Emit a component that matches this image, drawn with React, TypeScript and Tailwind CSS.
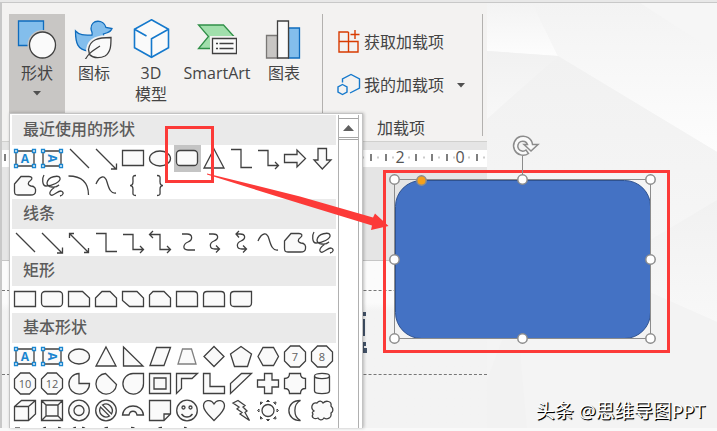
import type { ReactNode } from "react";

const INK = "#404040";
const BLUE = "#1a86d0";

function TextBox({ vertical }: { vertical?: boolean }) {
  return (
    <>
      <path d="M4 6h18v15H4z" />
      <text
        x="13"
        y="18"
        fontSize="12"
        fontWeight="700"
        textAnchor="middle"
        fill={BLUE}
        stroke="none"
        transform={vertical ? "rotate(90 13 13.5)" : undefined}
      >
        A
      </text>
      <g fill="#fff" stroke={BLUE}>
        <path d="M2.500 4.500h3v3h-3zM20.500 4.500h3v3h-3zM2.500 19.500h3v3h-3zM20.500 19.500h3v3h-3z" />
      </g>
    </>
  );
}

function Octagon({ label }: { label: string }) {
  return (
    <>
      <path d="M8.500 3h9L23.500 9v9L17.500 24h-9L2.500 18V9z" />
      <text x="13" y="17.500" fontSize="11" textAnchor="middle" fill="#606060" stroke="none">
        {label}
      </text>
    </>
  );
}

const glyphs: Record<string, ReactNode> = {
  "Text box": <TextBox />,
  "Vertical text box": <TextBox vertical />,
  Line: <path d="M4 4l19 19" />,
  Arrow: <path d="M3 4l20 20M23.500 18.500V24H18" />,
  "Double arrow": <path d="M3.500 4.500l19 19M3.500 9V4.500H8M22.500 19v4.500H18" />,
  Rectangle: <path d="M2.500 5.500h21v15h-21z" />,
  Oval: <ellipse cx="13" cy="13.500" rx="10.500" ry="7.500" />,
  "Rounded rectangle": <rect x="2.500" y="5.500" width="21" height="15" rx="3.500" />,
  Triangle: <path d="M13 4l10 19H3z" />,
  Elbow: <path d="M3 4.500h10v18h11" fill="none" />,
  "Elbow arrow": <path d="M3 5.500h10v15h10M20 17l3.500 3.500L20 24" fill="none" />,
  "Elbow double arrow": <path d="M3 5.500h10v15h10M20 17l3.500 3.500L20 24M6 2L2.500 5.500 6 9" fill="none" />,
  "Right arrow": <path d="M2.500 9.500H15V5l8.500 8.500L15 22v-4.500H2.500z" />,
  "Down arrow": <path d="M9 3.500h8.500V15H22l-8.700 9L5 15h4z" />,
  Freeform: (
    <path d="M2.500 12L9 4.500h8c3 0 4 2 1.500 4-3 2-3 5 .5 5.500 4 0 5 3 4.500 5.500 0 3-2 3.500-5 3.500H6c-3 0-3.500-1-3.500-4z" />
  ),
  Scribble: (
    <path
      d="M5 3C3 6 3 14 7 14c6 0 15-4 14-8-1-3-12-2-13 5 0 5 9 5 12 2-5 2-10 6-9 9 2 4 7-3 11-3 3 1 3 4-1 5"
      fill="none"
    />
  ),
  Arc: <path d="M2.500 4c13 0 20 6 20 19" fill="none" />,
  Curve: <path d="M3 12C7 3 12 3 14 10s4 12 9 11" fill="none" />,
  "Left brace": <path d="M16 3.500c-4 0-3 2-3 6 0 3-1 4-3 4 2 0 3 1 3 4 0 4-1 6 3 6" fill="none" />,
  "Right brace": <path d="M10 3.500c4 0 3 2 3 6 0 3 1 4 3 4-2 0-3 1-3 4 0 4 1 6-3 6" fill="none" />,
  "Curved line": <path d="M8 5h5c6 0 6 6 1 8s-6 8 0 8h7" fill="none" />,
  "Curved arrow": <path d="M8 5h4c6 0 6 5 1 7s-5 8 1 8h4M15 16.500l3.500 3.500-3.500 3.500" fill="none" />,
  "Curved double arrow": (
    <path d="M8 5h4c6 0 6 5 1 7s-5 8 1 8h4M15 16.500l3.500 3.500-3.500 3.500M11 2L8 5l3 3.500" fill="none" />
  ),
  "Snip one corner": <path d="M2.500 5.500h14l7 6.500v8.500h-21z" />,
  "Snip two corners": <path d="M2.500 12l6.500-6.500h8L23.500 12v8.500h-21z" />,
  "Snip diagonal": <path d="M2.500 5.500H17l6.500 6.500v8.500H9.500l-7-6z" />,
  "Snip and round": <path d="M6 5.500h11l6.500 6.500v8.500h-21V9z" />,
  "Round one corner": <path d="M2.500 5.500h17.500q3.500 0 3.500 3.500v11.500h-21z" />,
  "Round two corners": <path d="M6 5.500h14q3.500 0 3.500 3.500v11.500h-21V9Q2.500 5.500 6 5.500z" />,
  "Round diagonal": <path d="M6 5.500h17.500V17q0 3.500-3.500 3.500H6Q2.500 20.500 2.500 17V9Q2.500 5.500 6 5.500z" />,
  "Right triangle": <path d="M3.500 4l19.500 19H3.500z" />,
  Parallelogram: <path d="M9.500 4.500h14L17 22.500H3z" />,
  Trapezoid: <path d="M8.500 6h9l4.500 15H4z" stroke="#808080" />,
  Diamond: <path d="M13 3.500l10 10-10 10-10-10z" />,
  Pentagon: <path d="M13 3.500l10.500 7.500-4 12.500h-13L2.500 11z" />,
  Hexagon: <path d="M8 4.500h10.500l5 9-5 9H8l-5-9z" />,
  Heptagon: <Octagon label="7" />,
  Octagon: <Octagon label="8" />,
  Decagon: <Octagon label="10" />,
  Dodecagon: <Octagon label="12" />,
  Pie: <path d="M13 3.500v10h10.500A10.300 10.300 0 1 1 13 3.500z" />,
  Chord: <path d="M12.500 3.500l11 11A10.300 10.300 0 1 1 12.500 3.500z" />,
  Teardrop: <path d="M13 3.500h10.500v10A10.300 10.300 0 1 1 13 3.500z" />,
  Frame: <path d="M2.500 3.500h21v20h-21zM7 8h12v11H7z" />,
  "Half frame": <path d="M2.500 3.500h21L18 8.500H7.500v10l-5 5z" />,
  "L shape": <path d="M2.500 3.500H9v13h14.500v7h-21z" />,
  "Diagonal stripe": <path d="M13.500 3.500h10l-21 20v-10z" />,
  Cross: <path d="M9.500 3.500H17v6.500h6.500v7H17v6.500H9.500V17h-7v-7h7z" />,
  Plaque: <path d="M7.500 3.500h11q0 5 5 5v10q-5 0-5 5h-11q0-5-5-5v-10q5 0 5-5z" />,
  Cylinder: (
    <path d="M5.500 6v15c0 3.500 15 3.500 15 0V6M5.500 6c0-3.500 15-3.500 15 0s-15 3.500-15 0z" />
  ),
  Cube: <path d="M2.500 9.500l7-6h14v13.500l-7 6.500h-14zM2.500 9.500h14v14M16.500 9.500l7-6" />,
  Bevel: (
    <path d="M2.500 3.500h21v20h-21zM7 8h12v11H7zM2.500 3.500L7 8M23.500 3.500L19 8M2.500 23.500L7 19M23.500 23.500L19 19" />
  ),
  Donut: (
    <>
      <circle cx="13" cy="13.500" r="10.300" />
      <circle cx="13" cy="13.500" r="5" />
    </>
  ),
  "No symbol": (
    <>
      <circle cx="13" cy="13.500" r="10.300" />
      <path d="M9.500 8c6-3.500 12 3 9 9zM16.500 19c-6 3.500-12-3-9-9z" />
    </>
  ),
  "Block arc": <path d="M2.500 18c1-12 20-12 21 0h-6.500c-1-5-7-5-8 0z" />,
  "Folded corner": <path d="M2.500 3.500h21V17l-6.500 6.500H2.500zM17 23.500V17h6.500" />,
  Smiley: (
    <>
      <circle cx="13" cy="13.500" r="10.300" />
      <circle cx="9.500" cy="10.500" r="1.500" />
      <circle cx="16.500" cy="10.500" r="1.500" />
      <path d="M7.500 17c3 4 8 4 11 0" fill="none" />
    </>
  ),
  Heart: <path d="M13 7c3-5.500 10.500-4 10.500 2 0 5-6 10-10.500 14.500C8.500 19 2.500 14 2.500 9 2.500 3 10 1.500 13 7z" />,
  Lightning: <path d="M10 3.500l7 5-2 1.500 4 4-2 1.500 4.500 8L12 17l2-1.500L9 12l2-2-6-4z" />,
  Sun: (
    <>
      <circle cx="13" cy="13.500" r="6" />
      <path
        d="M11.500 4.500h3L13 3zM11.500 22.500h3L13 24zM4 12v3l-1.500-1.500zM22 12v3l1.500-1.500zM5.500 7.500l2-2-2-.5zM18.500 5.500l2 2 .5-2.500zM5.500 19.500l2 2-2 .5zM18.500 21.500l2-2 .5 2.500z"
        strokeWidth="1"
      />
    </>
  ),
  Moon: <path d="M18.500 3.500C11 7 11 20 18.500 23.500 3 24 3 3 18.500 3.500z" />,
  Cloud: (
    <path d="M5 14c-4-3-2-9 3-8 2-3 5-2 6 0 3-3 9-2 8 3 3 3 2 6 0 7 1 5-4 7-7 5-2 3-5 2-6 0-4 2-7-1-5-4-1-1-1-2 1-3z" />
  ),
  "Bracket pair": <path d="M7 3.500q-4 0-4 4v12q0 4 4 4M19 3.500q4 0 4 4v12q0 4-4 4" fill="none" />,
  "Brace pair": <path d="M10 3.500q-4 0-4 4v12M16 3.500q4 0 4 4v12" fill="none" />,
  "Left bracket": <path d="M15 3.500q-5 0-5 4v16" fill="none" />,
  "Right bracket": <path d="M11 3.500q5 0 5 4v16" fill="none" />,
  Chamfer: <path d="M3 4h5" fill="none" />,
};

const sections = [
  {
    title: "最近使用的形状",
    shapes: [
      "Text box", "Vertical text box", "Line", "Arrow", "Rectangle", "Oval",
      "Rounded rectangle", "Triangle", "Elbow", "Elbow arrow", "Right arrow", "Down arrow",
      "Freeform", "Scribble", "Arc", "Curve", "Left brace", "Right brace",
    ],
    selected: 6,
  },
  {
    title: "线条",
    shapes: [
      "Line", "Arrow", "Double arrow", "Elbow", "Elbow arrow", "Elbow double arrow",
      "Curved line", "Curved arrow", "Curved double arrow", "Curve", "Freeform", "Scribble",
    ],
  },
  {
    title: "矩形",
    shapes: [
      "Rectangle", "Rounded rectangle", "Snip one corner", "Snip two corners", "Snip diagonal",
      "Snip and round", "Round one corner", "Round two corners", "Round diagonal",
    ],
  },
  {
    title: "基本形状",
    shapes: [
      "Text box", "Vertical text box", "Oval", "Triangle", "Right triangle", "Parallelogram",
      "Trapezoid", "Diamond", "Pentagon", "Hexagon", "Heptagon", "Octagon",
      "Decagon", "Dodecagon", "Pie", "Chord", "Teardrop", "Frame",
      "Half frame", "L shape", "Diagonal stripe", "Cross", "Plaque", "Cylinder",
      "Cube", "Bevel", "Donut", "No symbol", "Block arc", "Folded corner",
      "Smiley", "Heart", "Lightning", "Sun", "Moon", "Cloud",
      "Chamfer", "Bracket pair", "Brace pair", "Left bracket", "Right bracket", "Left bracket", "Right brace",
    ],
  },
];

function ShapeMenu() {
  return (
    <div className="absolute top-[113px] bottom-[3px] left-[9px] z-10 flex gap-0.5 overflow-hidden border border-b-0 border-[#c3c3c3] bg-white pt-px pr-[3px] pl-0.5 shadow-[1px_0_3px_rgba(0,0,0,0.25)]">
      <div>
        {sections.map((section) => (
          <section key={section.title}>
            <h2 className="h-[30px] bg-[#eaeaea] pl-[11px] text-base leading-7 font-medium text-[#5c5c5c]">
              {section.title}
            </h2>
            <div className="grid grid-cols-[repeat(12,27px)]">
              {section.shapes.map((name, i) => (
                <button
                  key={i}
                  aria-label={name}
                  className={section.selected === i ? "h-[27px] bg-[#c4c4c4]" : "h-[27px]"}
                >
                  <svg width="27" height="27" viewBox="0 0 27 27" fill="#fafafa" stroke={INK} strokeWidth="1.3">
                    {glyphs[name]}
                  </svg>
                </button>
              ))}
            </div>
          </section>
        ))}
      </div>
      <div className="flex w-[21px] flex-col border-x border-[#b0b0b0] pt-[3px]">
        <button aria-label="Scroll up" className="flex h-5 items-center justify-center border-y border-[#a6a6a6]">
          <svg width="11" height="6" viewBox="0 0 11 6" fill="#606060">
            <path d="M5.500 0L11 6H0z" />
          </svg>
        </button>
        <div className="mt-px flex-1 border-t border-[#a6a6a6]" />
      </div>
    </div>
  );
}

function RibbonButton({ icon, children, className = "w-14" }: { icon: ReactNode; children: ReactNode; className?: string }) {
  return (
    <button className={`flex h-[99px] flex-col items-center pt-[5px] leading-[21px] ${className}`}>
      <svg className="mb-1 shrink-0" width="40" height="40" viewBox="0 0 40 40" fill="none" strokeWidth="1.3">
        {icon}
      </svg>
      {children}
    </button>
  );
}

function Caret() {
  return (
    <svg width="8" height="5" viewBox="0 0 8 5" fill="#505050">
      <path d="M0 0h8L4 4.500z" />
    </svg>
  );
}

function Ribbon() {
  return (
    <header className="flex h-[139px] border-b border-[#d0d0ce] bg-[#f3f2f1] pt-[11px] pr-1 pl-[7px] text-base text-[#444]">
      <RibbonButton
        className="w-14 bg-[#c8c6c4]"
        icon={
          <>
            <path d="M1.500 2h25v24.500h-25z" fill="#83beec" stroke="#0f6cbd" />
            <circle cx="25.500" cy="26" r="15" fill="#c8c6c4" />
            <circle cx="25.500" cy="26" r="13" fill="#fafafa" stroke={INK} />
          </>
        }
      >
        形状
        <span className="mt-[7px]">
          <Caret />
        </span>
      </RibbonButton>
      <RibbonButton
        className="w-[58px]"
        icon={
          <>
            <path
              d="M1.500 12c0 12 2 19 13 20 10-1 17-6 15-17l3-1c3-1 5-3 5.500-4.500L32 8.500C30 0 17 0 17 9.500c0 3 2 4 1 6.500-6 0-12 1-16.500-4z"
              fill="#83beec"
              stroke="#0f6cbd"
            />
            <path
              d="M37 18.500c-13 0-21 2-22.500 12l1 5C20 40 27 39 31 37c6-4 6-11 6-18.500z"
              fill="#fafafa"
              stroke="#f3f2f1"
              strokeWidth="5"
            />
            <path d="M37 18.500c-13 0-21 2-22.500 12l1 5C20 40 27 39 31 37c6-4 6-11 6-18.500z" fill="#fafafa" stroke={INK} />
            <path d="M11 41c3-6 7-9 15-14" stroke={INK} />
          </>
        }
      >
        图标
      </RibbonButton>
      <RibbonButton
        icon={
          <>
            <path d="M20.500.8l17 9.500v18.500l-17 9.500-17-9.500V10.300z" fill="#fafafa" stroke="#1579cc" strokeWidth="1.600" />
            <path d="M37.500 10.300l-17 9.500v18.500M3.500 10.300L15.500 17" stroke="#1579cc" strokeWidth="1.600" />
          </>
        }
      >
        <span>3D</span>
        <span>模型</span>
      </RibbonButton>
      <RibbonButton
        className="w-[76px]"
        icon={
          <>
            <path d="M1.500 6h25L37 17.500l-11 12H1.500l10-12z" fill="#a1dfac" stroke="#309048" />
            <path d="M13 17h28v20H13z" fill="#f3f2f1" />
            <path d="M15.500 19.500h24v15h-24z" fill="#fafafa" stroke={INK} />
            <path d="M19 24.500h2M22.500 24.500h14M19 29.500h2M22.500 29.500h14" stroke={INK} />
          </>
        }
      >
        SmartArt
      </RibbonButton>
      <RibbonButton
        className="w-[58px]"
        icon={
          <>
            <path d="M2.500 16.500h11V39h-11z" fill="#c8c6c4" stroke="#797775" />
            <path d="M24.500 9h11v30h-11z" fill="#83beec" stroke="#0f6cbd" />
            <path d="M13.500 2h11v37h-11z" fill="#fafafa" stroke={INK} />
          </>
        }
      >
        图表
      </RibbonButton>

      <div className="ml-[9px] h-[122px] border-l border-[#b3b1af]" />

      <div className="flex w-[159px] flex-col pl-3.5">
        <button className="mt-4 flex h-6 items-center gap-[3px] leading-6">
          <svg width="24" height="24" viewBox="0 0 24 24" fill="none" stroke="#d83b01" strokeWidth="1.400">
            <path d="M11.500 2H2v20h19V11.500H2M11.500 2v20M18 0v9M13.500 4.500h9" />
          </svg>
          获取加载项
        </button>
        <button className="mt-[19px] flex h-6 items-center gap-[3px] leading-6">
          <svg width="24" height="24" viewBox="0 0 24 24" fill="none" stroke="#1579cc" strokeWidth="1.400">
            <path d="M5.500 9.500V6L14 1.500 22.500 6v9L13 20M5.500 11.500l4.500 2.500v5L5.500 21.500 1 19v-5z" />
          </svg>
          我的加载项
          <span className="ml-2.5">
            <Caret />
          </span>
        </button>
        <div className="mt-[19px] pl-10 leading-6">加载项</div>
      </div>
      <div className="h-[122px] border-l border-[#b3b1af]" />
    </header>
  );
}

const ticks = [371, 386, 416, 432, 447, 477];
const dots = [363, 378, 393, 409, 424, 439, 454, 469, 484];

function Workspace() {
  return (
    <div className="flex flex-1 flex-col bg-[#e5e5e5] pt-2">
      <svg className="w-full overflow-visible bg-white" height="17" viewBox="2 0 485 17" preserveAspectRatio="xMinYMin">
        <path d="M5 4v7" stroke="#555" strokeWidth="1.500" />
        {ticks.map((x) => (
          <path key={x} d={`M${x} 4v7`} stroke="#555" strokeWidth="1.500" />
        ))}
        {dots.map((x) => (
          <path key={x} d={`M${x} 6.500v2`} stroke="#999" />
        ))}
        <g fontSize="16" fill="#555" textAnchor="middle">
          <text x="400" y="13">2</text>
          <text x="460" y="13">0</text>
        </g>
      </svg>
      <div className="h-[94px] border-b border-[#c6c6c6]" />
      <div className="flex-1 bg-linear-to-b from-[#fbfbfb] from-25% to-[#f3f3f3] to-30% pt-[29px]">
        <div className="h-[85px] border-y border-dashed border-[#777] pt-5">
          <svg className="ml-[360px]" width="6" height="42" viewBox="0 0 6 42" fill="#44546a">
            <path d="M0 1h4v4H0zM0 8h3v17H0zM0 31h4v4H2v2h3v5H0z" />
          </svg>
        </div>
      </div>
    </div>
  );
}

function SlideBackdrop() {
  return (
    <svg className="h-full w-full" viewBox="487 3 230 425" preserveAspectRatio="none">
      <defs>
        <linearGradient id="fade" x2="0" y2="1">
          <stop stopColor="#f3f3f3" />
          <stop offset="1" stopColor="#fdfdfd" />
        </linearGradient>
        <linearGradient id="dusk" x2="0" y2="1">
          <stop stopColor="#f1f1f1" />
          <stop offset="1" stopColor="#f8f8f8" />
        </linearGradient>
      </defs>
      <path d="M487 3h230v425H487z" fill="#f4f4f4" />
      <path d="M487 3h45l26 53-71-5z" fill="url(#fade)" />
      <path d="M532 3h185v149L558 56z" fill="url(#fade)" />
      <path d="M640 3h77v50z" fill="#f6f6f6" />
      <path d="M487 51l71 5-69 63h-2z" fill="url(#dusk)" />
      <path d="M558 56l159 96v48L600 320H487V119z" fill="url(#dusk)" />
      <path d="M717 200v122L600 270z" fill="url(#dusk)" />
      <path d="M600 270l117 52v106H600z" fill="#f3f3f3" />
      <path d="M487 320h113v108H487z" fill="#f4f4f4" />
      <path d="M502 340l-15 40v48h40l-8-88z" fill="#f2f2f2" />
    </svg>
  );
}

const handles = [
  [0, 0], [128, 0], [256, 0],
  [0, 80], [256, 80],
  [0, 159], [128, 159], [256, 159],
];

function SelectedShape() {
  return (
    <svg
      className="absolute top-[130px] left-[380px] z-20"
      width="284"
      height="222"
      viewBox="-14.500 -49.500 284 222"
      role="img"
      aria-label="Rounded rectangle"
    >
      <rect x="1" y="1" width="255" height="158" rx="26" fill="#4472c4" stroke="#2f528f" />
      <path d="M0 0h256v159H0zM128 0v-24" fill="none" stroke="#8c8c8c" />
      {handles.map(([x, y]) => (
        <circle key={`${x}-${y}`} cx={x} cy={y} r="4.700" fill="#fff" stroke="#8c8c8c" strokeWidth="1.500" />
      ))}
      <circle cx="27" cy="1" r="4.700" fill="#f5a11c" stroke="#8c8c8c" strokeWidth="1.500" />
      <path
        d="M138-35A9.500 9.500 0 1 0 134-26L131.500-29.500A5 5 0 1 1 133-35H129.500L136.500-28.500 143.500-35z"
        fill="#fafafa"
        stroke="#8c8c8c"
        strokeWidth="1.500"
      />
    </svg>
  );
}

export default function App() {
  return (
    <div className="relative flex min-h-screen flex-col overflow-hidden bg-[#f9f9f9] font-['Open_Sans','Noto_Sans_CJK_SC',sans-serif]">
      <div className="h-[3px] border-b border-[#c8c8c8] bg-[#e8e8e8]" />
      <main className="mb-[3px] flex flex-1">
        <div className="flex shrink-0 flex-col border-l-2 border-[#c8c8c8]">
          <Ribbon />
          <Workspace />
        </div>
        <div className="relative min-w-0 flex-1">
          <div className="absolute inset-0">
            <SlideBackdrop />
          </div>
        </div>
      </main>

      <ShapeMenu />
      <SelectedShape />

      <div className="absolute top-[126px] left-[165px] z-30 h-[57px] w-[49px] border-3 border-[#fc3a38]" />
      <div className="absolute top-[170px] left-[383px] z-10 h-[183px] w-[287px] border-3 border-[#fc3a38]" />
      <svg className="absolute top-[170px] left-[200px] z-30" width="190" height="62" viewBox="200 170 190 62" fill="#fc3a38">
        <path d="M207 173.500L300 196.500 373 217.500l2-4 13.500 12.500-17.500 4 1-4.500L300 203.500 207 174.500z" />
      </svg>

      <p className="absolute right-3 bottom-1.5 z-10 text-[19px] leading-7 text-white [text-shadow:1px_1px_0_#000,1px_1px_1px_#333]">
        头条 @思维导图PPT
      </p>
    </div>
  );
}
